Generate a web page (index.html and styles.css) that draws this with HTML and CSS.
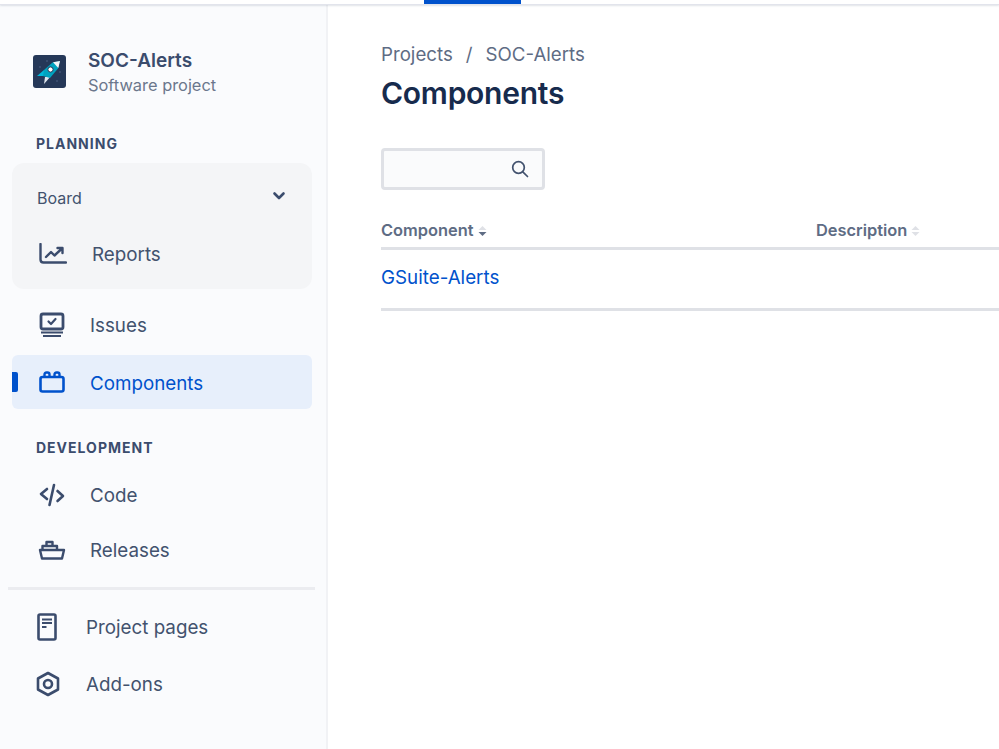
FILE: index.html
```html
<!DOCTYPE html>
<html lang="en" dir="ltr">
  <head>
    <meta charset="utf-8">
    <meta name="viewport" content="width=device-width, initial-scale=1.0">
    <title>Components - SOC-Alerts</title>
    <link rel="stylesheet" href="styles.css">
  </head>
  <body>
    <div class="topbar">
      <span class="topbar-tab"></span>
    </div>
    <div class="layout">
      <aside class="sidebar">
        <div class="project">
          <svg class="project-logo" width="33" height="33" viewBox="0 0 33 33">
            <rect width="33" height="33" rx="3" fill="#253858"/>
            <circle cx="7" cy="12" r="0.7" fill="#5b6f92"/>
            <circle cx="14" cy="6" r="0.7" fill="#5b6f92"/>
            <circle cx="27" cy="17" r="0.7" fill="#5b6f92"/>
            <circle cx="24" cy="26" r="0.7" fill="#5b6f92"/>
            <path d="M4 21 L11 15 L12 21 Z" fill="#00b8d9"/>
            <path d="M11 29 L18 21 L12 22 Z" fill="#dfe6ee"/>
            <path d="M27 6 L19.500 7.500 L11 15 L10 21 L17 23 L25 13.500 Z" fill="#00a3bf"/>
            <path d="M27 6 L20 7.300 L25.300 13 Z" fill="#f4f5f7"/>
            <circle cx="17.500" cy="14.500" r="2.600" fill="#fff" stroke="#253858" stroke-width="1"/>
          </svg>
          <div class="project-text">
            <div class="project-name">SOC-Alerts</div>
            <div class="project-type">Software project</div>
          </div>
        </div>

        <h4 class="nav-title nav-title-planning">PLANNING</h4>
        <div class="nav-group">
          <div class="nav-board">
            <span>Board</span>
            <svg width="14" height="10" viewBox="0 0 14 10"><path d="M2.500 2.500 L7 7 L11.500 2.500" fill="none" stroke="#3b4c6d" stroke-width="2.600" stroke-linecap="round" stroke-linejoin="round"/></svg>
          </div>
          <a class="nav-item nav-reports">
            <svg class="nav-icon" width="28" height="22" viewBox="0 0 28 22">
              <path d="M1.500 1 V16.500 Q1.500 19.500 4.500 19.500 H27" fill="none" stroke="#3b4c6d" stroke-width="2.400" stroke-linecap="round"/>
              <path d="M7 14 L12 9 L15.500 12.500 L23 5.500 M18.500 5 H23.500 V10" fill="none" stroke="#3b4c6d" stroke-width="2.400" stroke-linecap="round" stroke-linejoin="round"/>
            </svg>
            <span>Reports</span>
          </a>
        </div>

        <a class="nav-item nav-issues">
          <svg class="nav-icon" width="26" height="26" viewBox="0 0 26 26">
            <rect x="2" y="2" width="22" height="15" rx="2" fill="none" stroke="#3b4c6d" stroke-width="2.800"/>
            <path d="M9.500 9.500 L12 12 L16.500 7" fill="none" stroke="#3b4c6d" stroke-width="2.200" stroke-linecap="round" stroke-linejoin="round"/>
            <path d="M2 20.500 H24 M4 24 H22" fill="none" stroke="#3b4c6d" stroke-width="2.200"/>
          </svg>
          <span>Issues</span>
        </a>
        <a class="nav-item nav-active">
          <svg class="nav-icon" width="26" height="22" viewBox="0 0 26 22">
            <rect x="1.500" y="6" width="23" height="14.500" rx="2" fill="none" stroke="#0052cc" stroke-width="2.600"/>
            <path d="M5.500 6 V3.500 Q5.500 1.500 7.500 1.500 H8.500 Q10.500 1.500 10.500 3.500 V6 M15.500 6 V3.500 Q15.500 1.500 17.500 1.500 H18.500 Q20.500 1.500 20.500 3.500 V6" fill="none" stroke="#0052cc" stroke-width="2.400"/>
          </svg>
          <span>Components</span>
        </a>

        <h4 class="nav-title nav-title-dev">DEVELOPMENT</h4>
        <a class="nav-item nav-code">
          <svg class="nav-icon" width="26" height="24" viewBox="0 0 26 24">
            <path d="M8 6 L2 11 L8 16 M18.500 8 L24 13 L18.500 18 M15 2 L10.500 22" fill="none" stroke="#3b4c6d" stroke-width="2.600" stroke-linecap="round" stroke-linejoin="round"/>
          </svg>
          <span>Code</span>
        </a>
        <a class="nav-item nav-releases">
          <svg class="nav-icon" width="28" height="20" viewBox="0 0 28 20">
            <path d="M2 10 H26 L24 18.500 H4 Z" fill="none" stroke="#3b4c6d" stroke-width="2.400" stroke-linejoin="round"/>
            <path d="M4.500 10 V6 H19 V10 M8.500 6 V2 H14.500 V6" fill="none" stroke="#3b4c6d" stroke-width="2.400" stroke-linejoin="round"/>
          </svg>
          <span>Releases</span>
        </a>

        <div class="nav-divider"></div>

        <a class="nav-item nav-extra nav-pages">
          <svg class="nav-icon" width="20" height="28" viewBox="0 0 20 28">
            <rect x="1.500" y="1.500" width="17" height="25" rx="1.500" fill="none" stroke="#3b4c6d" stroke-width="2.600"/>
            <path d="M5 6.500 H15 M5 10 H15 M5 14 H9.500" fill="none" stroke="#3b4c6d" stroke-width="2"/>
          </svg>
          <span>Project pages</span>
        </a>
        <a class="nav-item nav-extra nav-addons">
          <svg class="nav-icon" width="24" height="26" viewBox="0 0 24 26">
            <path d="M12 2 L22 7.500 V18.500 L12 24 L2 18.500 V7.500 Z" fill="none" stroke="#3b4c6d" stroke-width="2.600" stroke-linejoin="round"/>
            <circle cx="12" cy="13" r="4" fill="none" stroke="#3b4c6d" stroke-width="2.600"/>
          </svg>
          <span>Add-ons</span>
        </a>
      </aside>

      <main class="content">
        <div class="breadcrumbs">
          <a>Projects</a>
          <span class="sep">/</span>
          <a>SOC-Alerts</a>
        </div>
        <h1>Components</h1>
        <div class="search">
          <svg width="18" height="18" viewBox="0 0 18 18">
            <circle cx="7.500" cy="7.500" r="5.800" fill="none" stroke="#42526e" stroke-width="1.700"/>
            <path d="M11.800 11.800 L16.500 16.500" fill="none" stroke="#42526e" stroke-width="1.700" stroke-linecap="round"/>
          </svg>
        </div>
        <div class="table">
          <div class="table-head">
            <div class="col-component">Component
              <svg class="sort" width="9" height="12" viewBox="0 0 9 12"><path d="M0.500 5 L4.500 1 L8.500 5 Z" fill="#dfe1e6"/><path d="M0.500 7 L4.500 11 L8.500 7 Z" fill="#5e6c84"/></svg>
            </div>
            <div class="col-description">Description
              <svg class="sort" width="9" height="12" viewBox="0 0 9 12"><path d="M0.500 5 L4.500 1 L8.500 5 Z" fill="#dfe1e6"/><path d="M0.500 7 L4.500 11 L8.500 7 Z" fill="#dfe1e6"/></svg>
            </div>
          </div>
          <div class="table-row">
            <a>GSuite-Alerts</a>
          </div>
        </div>
      </main>
    </div>
  </body>
</html>
```

FILE: styles.css
```css
* {
  box-sizing: border-box;
}

html, body {
  height: 100%;
}

body {
  margin: 0;
  background-color: #fff;
  color: #42526e;
  font-family: 'Inter', 'Liberation Sans', sans-serif;
  overflow: hidden;
}

.topbar {
  height: 5px;
  padding-left: 424px;
  background-color: #fff;
  border-bottom: 1px solid #e2e4ec;
  box-shadow: 0 1px 2px rgba(9, 30, 66, 0.12);
  position: relative;
}

.topbar-tab {
  display: block;
  width: 97px;
  height: 4px;
  background-color: #0052cc;
}

.layout {
  display: flex;
  height: 744px;
}

.sidebar {
  width: 328px;
  flex-shrink: 0;
  padding: 42px 14px 0 12px;
  background-color: #fafbfd;
  border-right: 2px solid #f1f2f5;
}

.project {
  display: flex;
  align-items: center;
  padding-left: 21px;
  height: 50px;
}

.project-logo {
  flex-shrink: 0;
  margin-right: 22px;
  margin-top: -1px;
}

.project-text {
  margin-top: 3px;
}

.project-name {
  font-size: 19px;
  font-weight: 600;
  line-height: 24px;
  color: #3b4c6d;
}

.project-type {
  font-size: 16.4px;
  line-height: 25px;
  color: #6b778c;
}

.nav-title {
  margin: 0;
  font-size: 14px;
  font-weight: 700;
  line-height: 18px;
  letter-spacing: 1px;
  color: #3b4c6d;
  padding-left: 24px;
}

.nav-title-planning {
  margin-top: 38px;
  margin-bottom: 10px;
}

.nav-title-dev {
  margin-top: 30px;
  margin-bottom: 20px;
}

.nav-group {
  height: 126px;
  border-radius: 12px;
  background-color: #f4f5f7;
}

.nav-board {
  display: flex;
  justify-content: space-between;
  align-items: center;
  height: 70px;
  padding: 0 26px 0 25px;
  font-size: 16px;
  color: #42526e;
}

.nav-board svg {
  margin-top: -4px;
}

.nav-item {
  display: flex;
  align-items: center;
  height: 54px;
  padding-left: 27px;
  font-size: 18.8px;
  color: #42526e;
  cursor: pointer;
}

.nav-icon {
  flex-shrink: 0;
  margin-right: 25px;
}

.nav-reports {
  height: 42px;
}

.nav-issues {
  margin-top: 9px;
  margin-bottom: 3px;
}

.nav-active {
  position: relative;
  border-radius: 6px;
  background-color: #e7effb;
  color: #0052cc;
}

.nav-active span {
  margin-top: 2px;
}

.nav-active::before {
  content: "";
  position: absolute;
  left: 0;
  top: 17px;
  width: 6px;
  height: 20px;
  border-radius: 0 2px 2px 0;
  background-color: #0052cc;
}

.nav-code {
  height: 36px;
  margin-bottom: 19px;
}

.nav-releases {
  height: 36px;
  padding-left: 26px;
}

.nav-releases .nav-icon {
  margin-right: 24px;
}

.nav-divider {
  height: 3px;
  margin: 19px -3px 0 -4px;
  background-color: #ebecf0;
}

.nav-extra {
  padding-left: 25px;
}

.nav-pages {
  height: 36px;
  margin-top: 19px;
  margin-bottom: 21px;
}

.nav-pages .nav-icon {
  margin-right: 29px;
}

.nav-addons {
  height: 36px;
  padding-left: 24px;
}

.nav-addons .nav-icon {
  margin-right: 26px;
}

.content {
  flex: 1;
  min-width: 0;
  padding: 37px 0 0 53px;
}

.breadcrumbs {
  display: flex;
  align-items: center;
  height: 24px;
  font-size: 18.7px;
  color: #5e6c84;
}

.sep {
  margin: 0 13px;
}

h1 {
  margin: 8px 0 0;
  font-size: 30px;
  font-weight: 600;
  line-height: 38px;
  letter-spacing: -0.25px;
  color: #172b4d;
}

.search {
  display: flex;
  justify-content: flex-end;
  align-items: center;
  width: 164px;
  height: 42px;
  margin-top: 36px;
  padding-right: 13px;
  background-color: #fafbfc;
  border: 3px solid #dfe1e6;
  border-radius: 4px;
}

.table {
  margin-top: 28px;
}

.table-head {
  display: flex;
  align-items: center;
  height: 32px;
  padding-bottom: 6px;
  font-size: 16.4px;
  font-weight: 600;
  color: #5e6c84;
  border-bottom: 3px solid #dfe1e6;
}

.col-component {
  width: 435px;
}

.sort {
  vertical-align: -1px;
}

.table-row {
  display: flex;
  align-items: center;
  height: 61px;
  padding-bottom: 4px;
  font-size: 18.8px;
  color: #0052cc;
  border-bottom: 3px solid #dfe1e6;
}
```
